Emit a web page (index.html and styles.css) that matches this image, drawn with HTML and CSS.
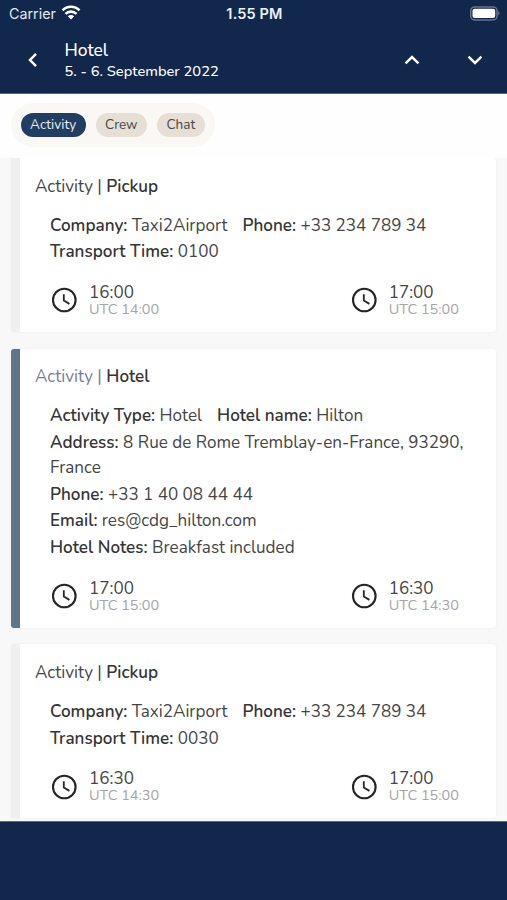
FILE: index.html
```html
<!DOCTYPE html>
<html lang="en">
<head>
<meta charset="utf-8">
<meta name="viewport" content="width=device-width, initial-scale=1">
<title>Hotel</title>
<link rel="stylesheet" href="styles.css">
</head>
<body>
<svg class="defs" width="0" height="0" aria-hidden="true">
  <symbol id="clock" viewBox="0 0 26 26"><circle cx="13.300" cy="13" r="11.300" fill="none" stroke="#252525" stroke-width="2.1"/><path d="M12.800 7.300v6.300l5.600 3.300" fill="none" stroke="#252525" stroke-width="1.8"/></symbol>
</svg>
<div class="app">
  <header class="header">
    <div class="status">
      <div class="carrier"><span>Carrier</span>
        <svg width="20" height="15" viewBox="0 0 20 15"><g fill="none" stroke="#fff" stroke-width="2.6"><path d="M1.500 5.400C6.200.6 13.800.6 18.500 5.400"/><path d="M4.500 8.900c3.100-3 7.900-3 11 0"/></g><path d="M6.800 11.200c1.900-1.700 4.500-1.700 6.400 0L10 14.500z" fill="#fff"/></svg>
      </div>
      <div class="clock-time">1.55 PM</div>
      <div class="battery"><svg width="31" height="15" viewBox="0 0 31 15"><rect x="1.700" y=".9" width="26.300" height="13" rx="4" fill="none" stroke="#66738f" stroke-width="1.500"/><rect x="3.500" y="2.700" width="22.700" height="9.400" rx="2.300" fill="#fff"/><path d="M29.200 5v4.500c1.800-.8 1.800-3.700 0-4.500z" fill="#66738f"/></svg></div>
    </div>
    <div class="nav">
      <svg class="back" width="10" height="16" viewBox="0 0 10 16"><path d="M8 1.800 2 8l6 6.200" fill="none" stroke="#fff" stroke-width="2.500"/></svg>
      <div class="heading"><div class="heading-title">Hotel</div><div class="heading-date">5. - 6. September 2022</div></div>
      <svg class="up" width="16" height="10" viewBox="0 0 16 10"><path d="M1.500 8.300 8 2l6.500 6.300" fill="none" stroke="#fff" stroke-width="2.500"/></svg>
      <svg width="16" height="10" viewBox="0 0 16 10"><path d="M1.500 1.700 8 8l6.500-6.300" fill="none" stroke="#fff" stroke-width="2.500"/></svg>
    </div>
  </header>
  <nav class="tabs"><div class="tab-group">
    <span class="tab tab-activity">Activity</span><span class="tab tab-crew">Crew</span><span class="tab tab-chat">Chat</span>
  </div></nav>
  <main class="list">
    <section class="card">
      <h2 class="title">Activity | <b>Pickup</b></h2>
      <div class="rows">
        <div class="row"><span><b>Company:</b> Taxi2Airport</span><span><b>Phone:</b> +33 234 789 34</span></div>
        <div class="row"><span><b>Transport Time:</b> 0100</span></div>
      </div>
      <div class="times">
        <div class="time"><svg width="26" height="26"><use href="#clock"/></svg><div><div class="local">16:00</div><div class="utc">UTC 14:00</div></div></div>
        <div class="time"><svg width="26" height="26"><use href="#clock"/></svg><div><div class="local">17:00</div><div class="utc">UTC 15:00</div></div></div>
      </div>
    </section>
    <section class="card card-active">
      <h2 class="title">Activity | <b>Hotel</b></h2>
      <div class="rows">
        <div class="row"><span><b>Activity Type:</b> Hotel</span><span><b>Hotel name:</b> Hilton</span></div>
        <div class="row"><span><b>Address:</b> 8 Rue de Rome Tremblay-en-France, 93290,<br>France</span></div>
        <div class="row"><span><b>Phone:</b> +33 1 40 08 44 44</span></div>
        <div class="row"><span><b>Email:</b> res@cdg_hilton.com</span></div>
        <div class="row"><span><b>Hotel Notes:</b> Breakfast included</span></div>
      </div>
      <div class="times">
        <div class="time"><svg width="26" height="26"><use href="#clock"/></svg><div><div class="local">17:00</div><div class="utc">UTC 15:00</div></div></div>
        <div class="time"><svg width="26" height="26"><use href="#clock"/></svg><div><div class="local">16:30</div><div class="utc">UTC 14:30</div></div></div>
      </div>
    </section>
    <section class="card">
      <h2 class="title">Activity | <b>Pickup</b></h2>
      <div class="rows">
        <div class="row"><span><b>Company:</b> Taxi2Airport</span><span><b>Phone:</b> +33 234 789 34</span></div>
        <div class="row"><span><b>Transport Time:</b> 0030</span></div>
      </div>
      <div class="times">
        <div class="time"><svg width="26" height="26"><use href="#clock"/></svg><div><div class="local">16:30</div><div class="utc">UTC 14:30</div></div></div>
        <div class="time"><svg width="26" height="26"><use href="#clock"/></svg><div><div class="local">17:00</div><div class="utc">UTC 15:00</div></div></div>
      </div>
    </section>
  </main>
  <footer class="footer"></footer>
</div>
</body>
</html>
```
FILE: styles.css
```css
* { box-sizing: border-box; }
body { margin: 0; font-family: Nunito, Lato, "Noto Sans", sans-serif; font-size: 17.08px; color: #454545; }
.defs { position: absolute; }
svg { display: block; flex: none; }
.app { width: 507px; height: 900px; display: flex; flex-direction: column; overflow: hidden; background: #f8f8f8; }

.header { height: 94px; flex: none; background: #12274c; color: #fff; border-bottom: 1px solid #4b6688; }
.status { height: 27px; padding: 0 7px 0 9px; display: grid; grid-template-columns: 1fr auto 1fr; align-items: center; font-family: Inter, sans-serif; font-size: 14.5px; }
.carrier { display: flex; align-items: center; gap: 5px; color: #e4e8ef; }
.carrier svg { margin-top: -2px; }
.carrier span { font-size: 14.3px; }
.clock-time { font-weight: 600; letter-spacing: .15px; color: #eef1f6; }
.battery { justify-self: end; }
.nav { height: 66px; padding: 0 24px 0 28px; display: flex; align-items: center; }
.back { margin-top: -1px; }
.heading { flex: 1; margin-left: 26.500px; }
.heading-title { font-size: 17.4px; line-height: 21px; font-weight: 500; }
.heading-date { font-size: 14.7px; line-height: 20px; font-weight: 500; }
.up { margin-right: 47.500px; }

.tabs { height: 64px; flex: none; padding: 9px 11px; background: #fefefe; }
.tab-group { width: 204px; height: 44px; padding: 0 10px 0 9.500px; display: flex; align-items: center; gap: 9.700px; background: #f9f8f5; border-radius: 22px; }
.tab { height: 24px; line-height: 24px; border-radius: 12px; text-align: center; font-size: 13.6px; background: #e5dfd6; color: #4b4845; }
.tab-activity { width: 65.500px; background: #223d62; color: #e9edf3; }
.tab-crew { width: 51.500px; }
.tab-chat { width: 48.500px; }

.list { flex: 1; min-height: 0; overflow: hidden; padding: 0 11px 0 11px; display: flex; flex-direction: column; gap: 16.500px; }
.card { flex: none; padding: 15.500px 37px 13.600px 15px; background: #fff; border-left: 9.500px solid #efefef; border-radius: 3px; box-shadow: 0 0 2px #e9e9e9; }
.card-active { border-left-color: #62748c; }
.title { margin: 0; font-size: 17.08px; line-height: 25px; font-weight: 400; }
b { font-weight: 600; color: #353535; }
.card-active .title { color: #777e94; }
.rows { margin: 15.200px 0 17.200px 15px; display: grid; gap: 2px; }
.row { display: flex; gap: 15px; line-height: 24.8px; white-space: nowrap; }
.times { height: 36px; margin-left: 16px; display: flex; justify-content: space-between; align-items: center; }
.time { display: flex; align-items: center; gap: 12px; }
.local { font-size: 17.08px; line-height: 17px; }
.utc { font-size: 14.5px; line-height: 16px; color: #a5a5a5; }
.footer { height: 79px; flex: none; background: #12274c; border-top: 1px solid #536b87; }
```
